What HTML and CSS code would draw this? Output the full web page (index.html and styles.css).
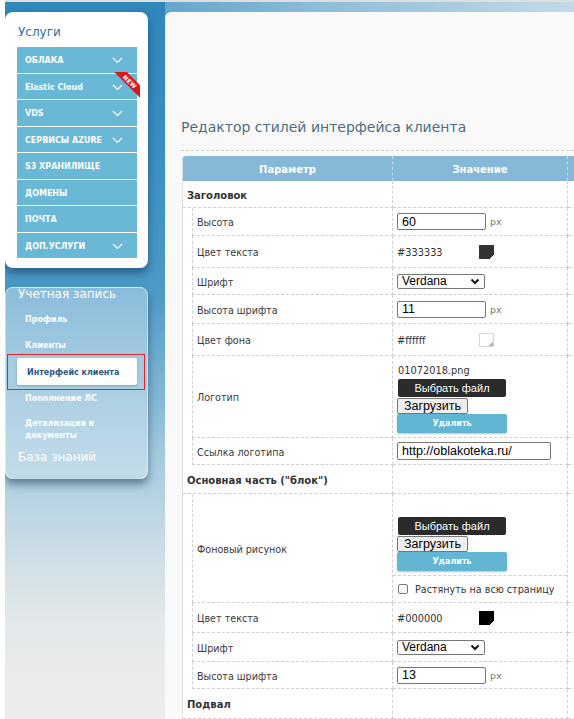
FILE: index.html
```html
<!DOCTYPE html>
<html lang="ru">
<head>
<meta charset="utf-8">
<title>Редактор стилей интерфейса клиента</title>
<link rel="stylesheet" href="styles.css">
</head>
<body>
<div class="page">
  <aside class="side">
    <nav class="card services">
      <h2 class="card-title">Услуги</h2>
      <ul class="menu">
        <li class="menu-item">ОБЛАКА<svg class="chev" width="11" height="7" viewBox="0 0 11 7"><polyline points="1,1 5.5,5.5 10,1"/></svg></li>
        <li class="menu-item">Elastic Cloud<svg class="chev" width="11" height="7" viewBox="0 0 11 7"><polyline points="1,1 5.5,5.5 10,1"/></svg><span class="ribbon"><span class="ribbon-band">NEW</span></span></li>
        <li class="menu-item">VDS<svg class="chev" width="11" height="7" viewBox="0 0 11 7"><polyline points="1,1 5.5,5.5 10,1"/></svg></li>
        <li class="menu-item">СЕРВИСЫ AZURE<svg class="chev" width="11" height="7" viewBox="0 0 11 7"><polyline points="1,1 5.5,5.5 10,1"/></svg></li>
        <li class="menu-item">S3 ХРАНИЛИЩЕ</li>
        <li class="menu-item">ДОМЕНЫ</li>
        <li class="menu-item">ПОЧТА</li>
        <li class="menu-item">ДОП.УСЛУГИ<svg class="chev" width="11" height="7" viewBox="0 0 11 7"><polyline points="1,1 5.5,5.5 10,1"/></svg></li>
      </ul>
    </nav>
    <nav class="card account">
      <h2 class="card-title light">Учетная запись</h2>
      <ul class="sub-menu">
        <li class="sub-item">Профиль</li>
        <li class="sub-item">Клиенты</li>
        <li class="sub-item active">Интерфейс клиента</li>
        <li class="sub-item">Пополнение ЛС</li>
        <li class="sub-item two-line">Детализация и<br>документы</li>
      </ul>
      <h2 class="card-title light kb">База знаний</h2>
    </nav>
  </aside>

  <main class="panel">
    <h1 class="page-title">Редактор стилей интерфейса клиента</h1>
    <div class="grid">
      <div class="row head">
        <div class="th span2">Параметр</div>
        <div class="th">Значение</div>
        <div class="th last"></div>
      </div>

      <div class="row group h27">
        <div class="gt span2">Заголовок</div><div class="v"></div><div class="x"></div>
      </div>
      <div class="row">
        <div class="ind"></div><div class="lab">Высота</div>
        <div class="v"><input class="field" type="text" value="60"><span class="unit">px</span></div><div class="x"></div>
      </div>
      <div class="row h32">
        <div class="ind"></div><div class="lab">Цвет текста</div>
        <div class="v"><span class="hex">#333333</span><span class="swatch dark"></span></div><div class="x"></div>
      </div>
      <div class="row h27">
        <div class="ind"></div><div class="lab">Шрифт</div>
        <div class="v"><div class="select"><span>Verdana</span><svg width="10" height="7" viewBox="0 0 10 7"><polyline points="1.5,1.5 5,5 8.5,1.5"/></svg></div></div><div class="x"></div>
      </div>
      <div class="row h29">
        <div class="ind"></div><div class="lab">Высота шрифта</div>
        <div class="v"><input class="field" type="text" value="11"><span class="unit">px</span></div><div class="x"></div>
      </div>
      <div class="row h32">
        <div class="ind"></div><div class="lab">Цвет фона</div>
        <div class="v"><span class="hex">#ffffff</span><span class="swatch white"></span></div><div class="x"></div>
      </div>
      <div class="row">
        <div class="ind"></div><div class="lab">Логотип</div>
        <div class="v file">
          <span class="fname">01072018.png</span>
          <button class="btn-choose" type="button">Выбрать файл</button>
          <button class="btn-upload" type="button">Загрузить</button>
          <button class="btn-delete" type="button">Удалить</button>
        </div><div class="x"></div>
      </div>
      <div class="row h27">
        <div class="ind"></div><div class="lab">Ссылка логотипа</div>
        <div class="v"><input class="field wide" type="text" value="http://oblakoteka.ru/"></div><div class="x"></div>
      </div>

      <div class="row group h29">
        <div class="gt span2">Основная часть ("блок")</div><div class="v"></div><div class="x"></div>
      </div>
      <div class="row">
        <div class="ind"></div><div class="lab">Фоновый рисунок</div>
        <div class="v split">
          <div class="file vtop">
            <span class="fname"></span>
            <button class="btn-choose" type="button">Выбрать файл</button>
            <button class="btn-upload" type="button">Загрузить</button>
            <button class="btn-delete" type="button">Удалить</button>
          </div>
          <label class="vbot"><span class="check"></span>Растянуть на всю страницу</label>
        </div><div class="x"></div>
      </div>
      <div class="row h30">
        <div class="ind"></div><div class="lab">Цвет текста</div>
        <div class="v"><span class="hex">#000000</span><span class="swatch black"></span></div><div class="x"></div>
      </div>
      <div class="row h29">
        <div class="ind"></div><div class="lab">Шрифт</div>
        <div class="v"><div class="select"><span>Verdana</span><svg width="10" height="7" viewBox="0 0 10 7"><polyline points="1.5,1.5 5,5 8.5,1.5"/></svg></div></div><div class="x"></div>
      </div>
      <div class="row h27">
        <div class="ind"></div><div class="lab">Высота шрифта</div>
        <div class="v"><input class="field" type="text" value="13"><span class="unit">px</span></div><div class="x"></div>
      </div>

      <div class="row group h30">
        <div class="gt span2">Подвал</div><div class="v"></div><div class="x"></div>
      </div>
    </div>
  </main>
</div>
</body>
</html>
```

FILE: styles.css
```css
html, body {
  margin: 0;
  padding: 0;
  background: #ffffff;
  overflow: hidden;
}

body {
  font-family: "DejaVu Sans", Verdana, sans-serif;
  width: 574px;
  height: 719px;
}

.page {
  display: flex;
  margin-left: 5px;
  height: 717px;
  border-top: 2px solid #dedede;
  background: linear-gradient(90deg, #3c8ec0 0%, #8cbcd8 55%, #c3dae7 100%);
  overflow: hidden;
}

/* ---------- sidebar ---------- */
.side {
  flex: 0 0 160px;
  align-self: stretch;
  box-sizing: border-box;
  padding-top: 10px;
  background: linear-gradient(180deg,
    #2f87bc 0px,
    #3a8fc2 150px,
    #4d9ac8 290px,
    #86b9d7 400px,
    #a3c9de 450px,
    #b8d4e3 500px,
    #d0dfe7 560px,
    #e3e8ea 620px,
    #ebebeb 680px,
    #ececec 717px);
}

.card {
  width: 143px;
  box-sizing: border-box;
  border-radius: 8px;
  box-shadow: 0 5px 8px rgba(10, 40, 70, 0.5);
}

.services {
  background: #ffffff;
  padding: 12px 11px 10px 12px;
}

.card-title {
  margin: 0 0 7px 0;
  padding-left: 1px;
  font-size: 12px;
  line-height: 16px;
  font-weight: normal;
  color: #2c6ea2;
}

.menu {
  list-style: none;
  margin: 0;
  padding: 0;
  display: flex;
  flex-direction: column;
  gap: 1px;
}

.menu-item {
  position: relative;
  height: 25.5px;
  box-sizing: border-box;
  display: flex;
  align-items: center;
  padding: 2px 0 0 8px;
  background: #69b8d5;
  color: #ffffff;
  font-size: 8px;
  font-weight: bold;
}

.chev {
  margin-left: auto;
  margin-right: 14px;
  fill: none;
  stroke: #ffffff;
  stroke-width: 1.2;
}

.ribbon {
  position: absolute;
  right: -3px;
  top: -2px;
  width: 27px;
  height: 26px;
  overflow: hidden;
}

.ribbon-band {
  position: absolute;
  left: -3.5px;
  top: 5px;
  width: 40px;
  height: 9px;
  background: #d8191c;
  color: #ffffff;
  font-size: 6px;
  font-weight: bold;
  line-height: 9px;
  text-align: center;
  letter-spacing: 0.3px;
  transform: rotate(45deg);
}

.account {
  margin-top: 19px;
  padding: 0 10px 13px 11px;
  border: 1px solid rgba(255, 255, 255, 0.45);
  background: linear-gradient(180deg, rgba(150, 195, 222, 0.85) 0%, rgba(196, 220, 233, 0.95) 100%);
}

.card-title.light {
  color: #ffffff;
  line-height: 12px;
  margin-bottom: 6px;
}

.card-title.kb {
  line-height: 16px;
  padding-top: 2px;
  margin: 0;
}

.sub-menu {
  list-style: none;
  margin: 0;
  padding: 0;
}

.sub-item {
  position: relative;
  height: 26px;
  box-sizing: border-box;
  display: flex;
  align-items: center;
  padding: 1px 0 0 8px;
  color: #ffffff;
  font-size: 8px;
  font-weight: bold;
}

.sub-item.active {
  height: 27px;
  padding-left: 10px;
  background: #ffffff;
  color: #2b5a85;
  border-radius: 2px;
  box-shadow: 0 1px 2px rgba(0, 40, 70, 0.25);
}

.sub-item.active::after {
  content: "";
  position: absolute;
  left: -10px;
  right: -8px;
  top: -4px;
  bottom: -5px;
  border: 1.5px solid #e3262b;
}

.sub-item.two-line {
  height: auto;
  padding-top: 7px;
  padding-bottom: 5px;
  line-height: 12px;
}

/* ---------- main panel ---------- */
.panel {
  flex: 1;
  min-width: 0;
  margin-top: 10px;
  padding: 105px 0 0 16px;
  background: #f9f9f9;
  border-radius: 6px 0 0 0;
  overflow: hidden;
}

.page-title {
  margin: 0;
  padding-bottom: 13px;
  border-bottom: 1px dashed #cfcfcf;
  font-size: 14px;
  line-height: 20px;
  font-weight: normal;
  color: #4e6e7e;
  white-space: nowrap;
}

.grid {
  margin: 5px 0 0 1px;
  width: 446px;
  background: #ffffff;
  border-left: 1px solid #dedede;
}

.row {
  display: grid;
  grid-template-columns: 9px 201px 175px 60px;
  min-height: 28px;
}

.row.h27 { min-height: 27px; }
.row.h29 { min-height: 29px; }
.row.h30 { min-height: 30px; }
.row.h32 { min-height: 32px; }

.row > div {
  box-sizing: border-box;
  display: flex;
  align-items: center;
}

.span2 { grid-column: span 2; }

.row.head {
  min-height: 25px;
  background: #86b8d8;
  border-radius: 3px 0 0 0;
}

.th {
  justify-content: center;
  padding-top: 1px;
  color: #ffffff;
  font-size: 10px;
  font-weight: bold;
  border-right: 1px dashed #c8dcea;
}

.th.last { border-right: 0; }

.gt {
  padding: 2px 0 0 4px;
  font-size: 10px;
  font-weight: bold;
  color: #333333;
  border-right: 1px dashed #cfcfcf;
  border-bottom: 1px dashed #cfcfcf;
}

.lab {
  padding: 2px 0 0 4px;
  font-size: 9.6px;
  color: #3a3a3a;
  border-left: 1px dashed #cfcfcf;
  border-right: 1px dashed #cfcfcf;
  border-bottom: 1px dashed #cfcfcf;
}

.v {
  padding-left: 4px;
  border-right: 1px dashed #cfcfcf;
  border-bottom: 1px dashed #cfcfcf;
}

.x {
  border-bottom: 1px dashed #cfcfcf;
}

.field {
  width: 89px;
  height: 17px;
  box-sizing: border-box;
  margin: 0;
  padding: 0 4px;
  border: 1px solid #767676;
  border-radius: 2px;
  background: #ffffff;
  font-family: "Liberation Sans", Arial, sans-serif;
  font-size: 12.5px;
  color: #000000;
}

.field.wide {
  width: 154px;
  height: 18px;
}

.unit {
  margin-left: 4px;
  font-size: 9.5px;
  color: #777777;
}

.select {
  width: 88px;
  height: 15px;
  box-sizing: border-box;
  display: flex;
  align-items: center;
  justify-content: space-between;
  padding: 0 4px;
  border: 1px solid #767676;
  border-radius: 2px;
  background: #ffffff;
  font-family: "Liberation Sans", Arial, sans-serif;
  font-size: 12px;
  color: #000000;
}

.select svg {
  fill: none;
  stroke: #111111;
  stroke-width: 2;
}

.hex {
  display: inline-block;
  width: 82px;
  padding-top: 2px;
  font-size: 9.8px;
  color: #333333;
}

.swatch {
  position: relative;
  width: 15px;
  height: 14px;
  box-sizing: border-box;
}

.swatch::after {
  content: "";
  position: absolute;
  right: 0;
  bottom: 0;
  width: 4px;
  height: 4px;
  background: linear-gradient(135deg, transparent 50%, #ffffff 50%);
}

.swatch.dark { background: #333333; }
.swatch.black { background: #000000; }
.swatch.white { background: #ffffff; border: 1px solid #d6d6d6; }
.swatch.white::after { background: linear-gradient(135deg, transparent 50%, #b5b5b5 50%); }

.row > .file,
.file {
  flex-direction: column;
  align-items: flex-start;
  justify-content: flex-start;
  padding: 8px 0 4px 4px;
}

.fname {
  height: 14px;
  margin: 0 0 1px 1px;
  font-size: 9.8px;
  line-height: 14px;
  color: #333333;
}

.btn-choose {
  width: 108px;
  height: 18px;
  margin: 0 0 0 1px;
  padding: 0;
  border: 0;
  border-radius: 2px;
  background: #2b2b2b;
  color: #ffffff;
  font-family: "Liberation Sans", Arial, sans-serif;
  font-size: 11px;
}

.btn-upload {
  height: 16px;
  margin: 1px 0 0 0;
  padding: 0 6px;
  border: 1px solid #767676;
  border-radius: 2px;
  background: #efefef;
  color: #000000;
  font-family: "Liberation Sans", Arial, sans-serif;
  font-size: 12.5px;
  line-height: 14px;
}

.btn-delete {
  width: 110px;
  height: 19px;
  margin: 0;
  padding: 0;
  border: 0;
  border-radius: 2px;
  background: #63b5d4;
  color: #ffffff;
  font-family: "DejaVu Sans", Verdana, sans-serif;
  font-size: 8px;
  font-weight: bold;
  box-shadow: 0 1px 2px rgba(0, 0, 0, 0.25);
}

.row > .split {
  flex-direction: column;
  align-items: stretch;
  padding: 0;
}

.vtop {
  display: flex;
  border-bottom: 1px dashed #cfcfcf;
}

.vbot {
  height: 26px;
  display: flex;
  align-items: center;
  padding-left: 5px;
  font-size: 9.6px;
  color: #333333;
}

.check {
  width: 10px;
  height: 10px;
  box-sizing: border-box;
  margin-right: 7px;
  border: 1px solid #767676;
  border-radius: 2px;
  background: #ffffff;
}
```
